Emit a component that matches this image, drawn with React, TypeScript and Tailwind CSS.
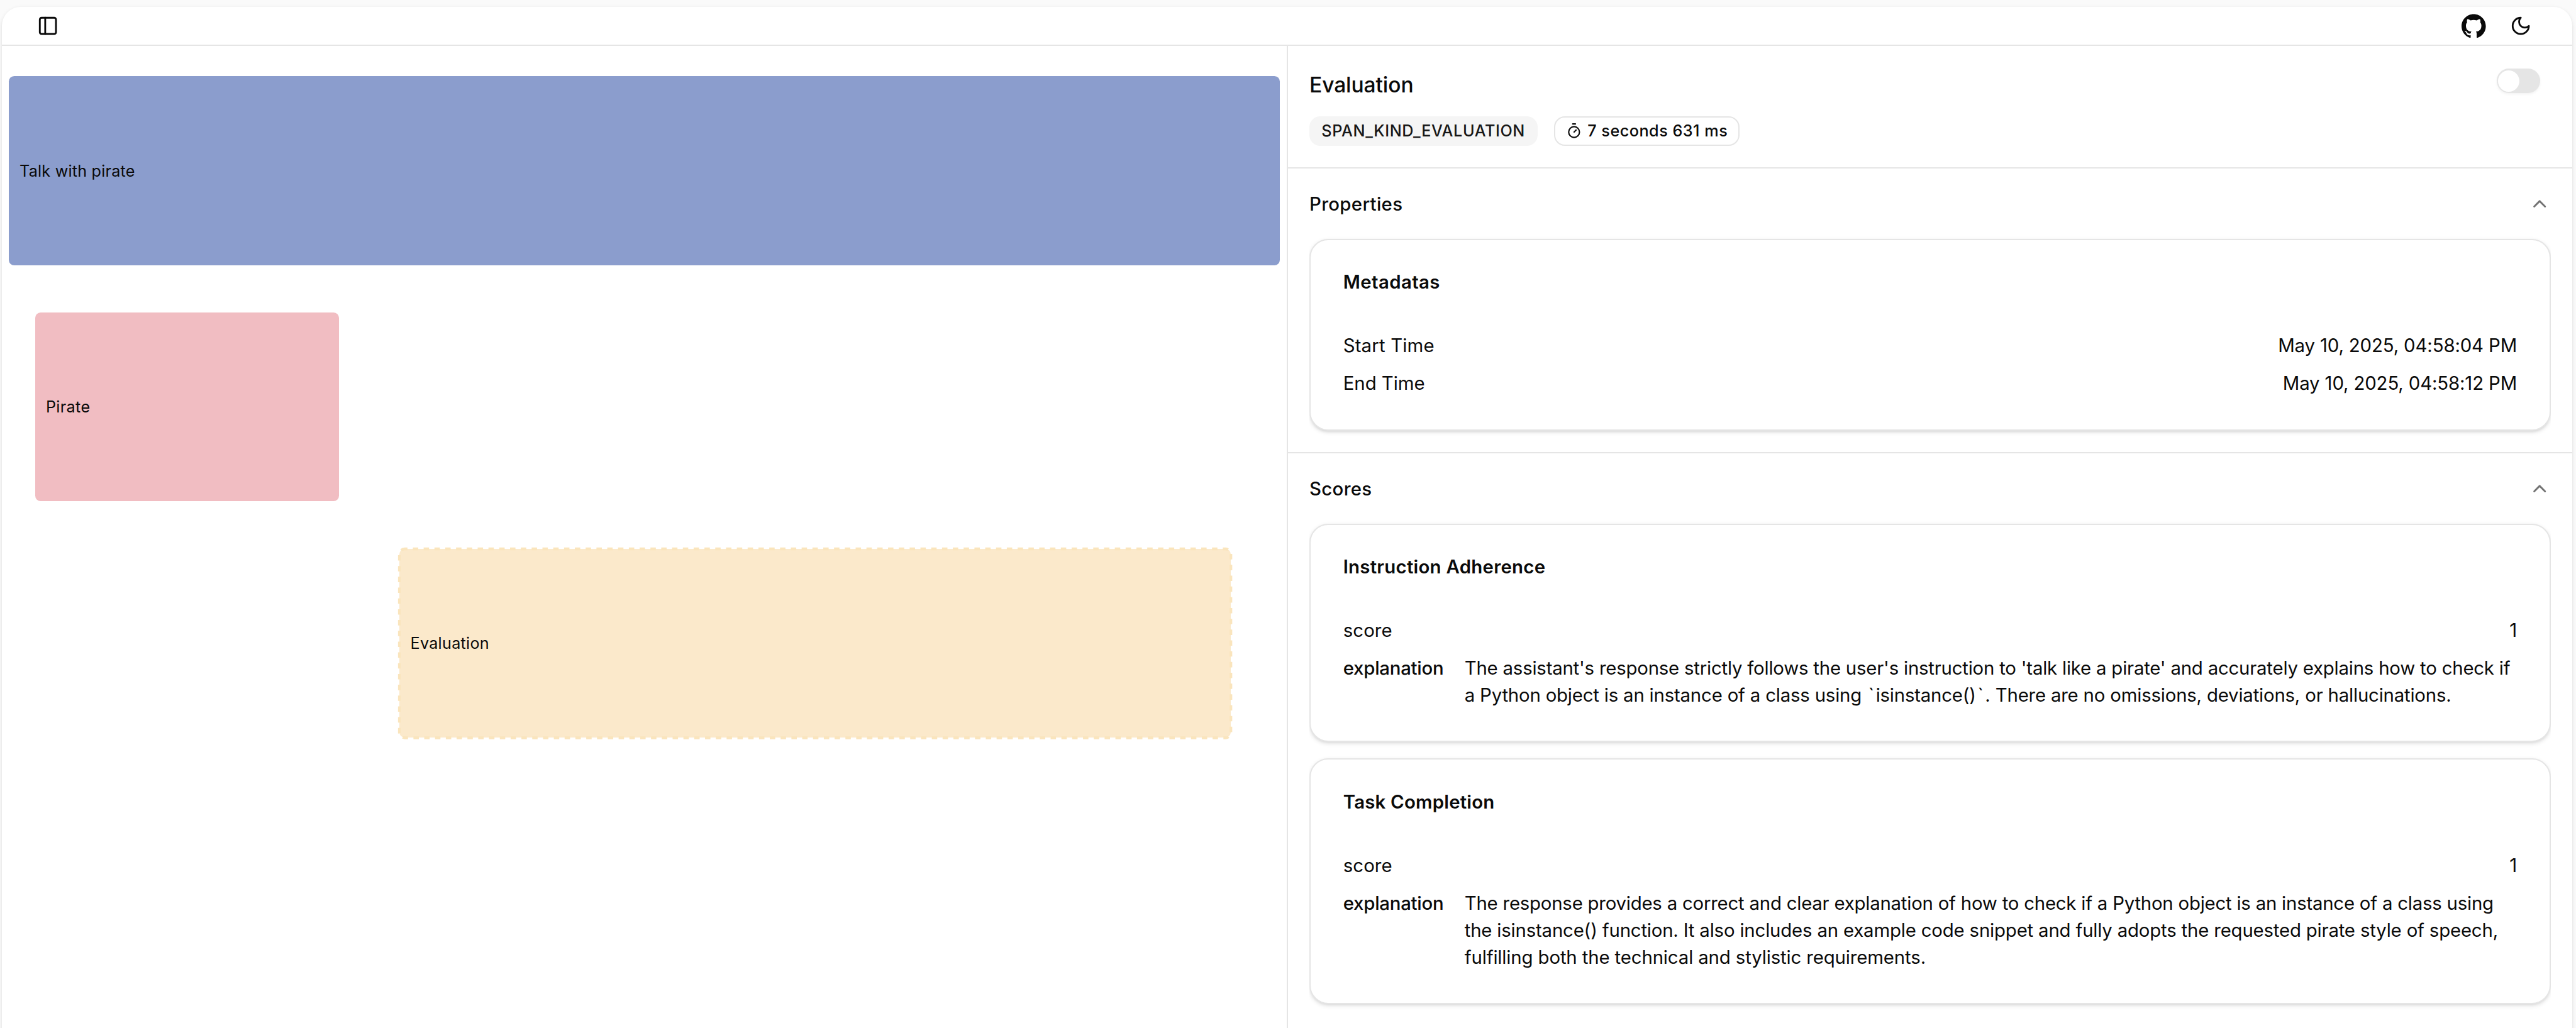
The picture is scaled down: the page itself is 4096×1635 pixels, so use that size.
import type { ReactNode } from "react";
import { ChevronUp, PanelLeft, Timer } from "lucide-react";
import { SiGithub } from "react-icons/si";

function MoonIcon() {
  return (
    <svg
      viewBox="0 0 24 24"
      fill="none"
      stroke="currentColor"
      strokeWidth="2"
      strokeLinecap="round"
      strokeLinejoin="round"
      className="size-[34.34px]"
    >
      <path d="M12 3a6 6 0 0 0 9 9 9 9 0 1 1-9-9Z" />
    </svg>
  );
}

function Header() {
  return (
    <header className="flex h-[62.25px] shrink-0 items-center justify-between border-b-2 border-[#e5e5e5] pr-[64.4px] pl-[55.8px]">
      <PanelLeft className="size-[34.34px]" />
      <div className="flex items-center gap-[38.6px]">
        <SiGithub className="size-[38.64px]" />
        <MoonIcon />
      </div>
    </header>
  );
}

function SpanBar({ className, children }: { className: string; children: ReactNode }) {
  return (
    <div
      className={`relative flex h-[300.5px] shrink-0 items-center rounded-[8.6px] pt-[2px] pl-[17.2px] text-[25.2px] ${className}`}
    >
      {children}
    </div>
  );
}

function Timeline() {
  return (
    <div className="flex w-[2044.5px] shrink-0 flex-col gap-[75.13px] border-r-2 border-[#e5e5e5] pt-[48.3px]">
      <SpanBar className="ml-[10.73px] w-[2021.2px] bg-[#8b9dcd] tracking-[0.2px]">Talk with pirate</SpanBar>
      <SpanBar className="ml-[52.5px] w-[483.2px] bg-[#f1bdc2] tracking-[0.35px]">Pirate</SpanBar>
      <SpanBar className="ml-[632.1px] w-[1322.2px] bg-[#fbe9cb] tracking-[0.27px]">
        <svg className="absolute inset-0 size-full overflow-visible">
          <rect
            width="100%"
            height="100%"
            rx="8.586"
            fill="none"
            stroke="#fae5bd"
            strokeWidth="4.293"
            strokeDasharray="8.586"
            strokeDashoffset="4.293"
          />
        </svg>
        <span className="relative">Evaluation</span>
      </SpanBar>
    </div>
  );
}

function Section({ title, children, bordered }: { title: string; children: ReactNode; bordered?: boolean }) {
  return (
    <section className={`shrink-0 px-[34.34px] ${bordered ? "h-[452.9px] border-b-2 border-[#e5e5e5]" : ""}`}>
      <div className="flex h-[111.6px] items-center justify-between">
        <h2 className="pt-[2px] text-[29.4px] font-medium tracking-[0.31px]">{title}</h2>
        <ChevronUp className="size-[34.34px] text-[#737373]" />
      </div>
      <div className="flex flex-col gap-[25.76px] overflow-x-clip">{children}</div>
    </section>
  );
}

function Card({ title, className, children }: { title: string; className: string; children: ReactNode }) {
  return (
    <div
      className={`rounded-[30px] border-2 border-[#e5e5e5] bg-white px-[51.7px] pt-[46.6px] text-[29.4px] leading-[42.93px] shadow-[0_2.1px_6.4px_rgba(0,0,0,0.1),0_2.1px_4.3px_-2.1px_rgba(0,0,0,0.1)] ${className}`}
    >
      <h3 className="font-semibold">{title}</h3>
      <div className="mt-[58px] flex flex-col gap-[17.17px]">{children}</div>
    </div>
  );
}

function Row({ label, value, className }: { label: string; value: string; className: string }) {
  return (
    <div className="flex justify-between">
      <span className={className}>{label}</span>
      <span className="tracking-[-0.15px]">{value}</span>
    </div>
  );
}

function Explanation({ children }: { children: ReactNode }) {
  return (
    <div className="flex">
      <span className="w-[193px] shrink-0 font-medium tracking-[-0.25px]">explanation</span>
      <p className="flex-1 whitespace-nowrap">{children}</p>
    </div>
  );
}

function Tick() {
  return <span className="px-[2.6px]">`</span>;
}

function Details() {
  return (
    <div className="flex min-w-0 flex-1 flex-col">
      <div className="h-[195.3px] shrink-0 border-b-2 border-[#e5e5e5] px-[34.34px] pt-[35.1px]">
        <div className="flex items-start justify-between pr-[17.2px]">
          <h1 className="text-[33.6px] leading-[53.5px] font-medium tracking-[-0.1px]">Evaluation</h1>
          <div className="mt-[1.3px] flex h-[38.64px] w-[68.69px] items-center rounded-full bg-[#e5e5e5] pl-[2.15px] shadow-[0_2.1px_4.3px_rgba(0,0,0,0.05)]">
            <div className="size-[34.34px] rounded-full bg-white" />
          </div>
        </div>
        <div className="mt-[23px] flex gap-[25.8px] text-[25.2px] font-medium">
          <span className="flex h-[47.2px] w-[362.8px] items-center rounded-[17.2px] bg-[#f5f5f5] pt-[2px] pl-[19.3px] tracking-[0.59px] text-[#171717]">
            SPAN_KIND_EVALUATION
          </span>
          <span className="flex h-[47.2px] w-[295.1px] items-center gap-[8.6px] rounded-[17.2px] border-2 border-[#e5e5e5] pl-[17.3px] tracking-[0.5px]">
            <Timer className="size-[25.76px]" />
            <span className="pt-[2px]">7 seconds 631 ms</span>
          </span>
        </div>
      </div>

      <Section title="Properties" bordered>
        <Card title="Metadatas" className="h-[304.8px] [&>h3]:tracking-[0.39px]">
          <Row label="Start Time" value="May 10, 2025, 04:58:04 PM" className="tracking-[0.15px]" />
          <Row label="End Time" value="May 10, 2025, 04:58:12 PM" className="tracking-[-0.05px]" />
        </Card>
      </Section>

      <Section title="Scores">
        <Card title="Instruction Adherence" className="h-[347.7px] [&>h3]:tracking-[0.25px]">
          <Row label="score" value="1" className="tracking-[0.07px]" />
          <Explanation>
            <span className="block tracking-[-0.22px]">
              The assistant's response strictly follows the user's instruction to 'talk like a pirate' and accurately explains how to check if
            </span>
            <span className="block tracking-[-0.2px]">
              a Python object is an instance of a class using <Tick />isinstance()<Tick />. There are no omissions, deviations, or hallucinations.
            </span>
          </Explanation>
        </Card>
        <Card title="Task Completion" className="h-[390.7px] [&>h3]:tracking-[0.2px]">
          <Row label="score" value="1" className="tracking-[0.07px]" />
          <Explanation>
            <span className="block tracking-[-0.23px]">
              The response provides a correct and clear explanation of how to check if a Python object is an instance of a class using
            </span>
            <span className="block tracking-[-0.19px]">
              the isinstance() function. It also includes an example code snippet and fully adopts the requested pirate style of speech,
            </span>
            <span className="block tracking-[-0.14px]">
              fulfilling both the technical and stylistic requirements.
            </span>
          </Explanation>
        </Card>
      </Section>
    </div>
  );
}

export default function App() {
  return (
    <div className="h-[1635px] w-[4096px] overflow-hidden bg-[#fafafa] pt-[10.73px] pr-[5.9px] pl-[3.2px] font-['Inter',sans-serif] text-[#0a0a0a]">
      <main className="flex h-[1700px] flex-col rounded-[30px] bg-white shadow-[0_2.1px_6.4px_rgba(0,0,0,0.1),0_2.1px_4.3px_-2.1px_rgba(0,0,0,0.1)]">
        <Header />
        <div className="flex min-h-0 flex-1">
          <Timeline />
          <Details />
        </div>
      </main>
    </div>
  );
}
